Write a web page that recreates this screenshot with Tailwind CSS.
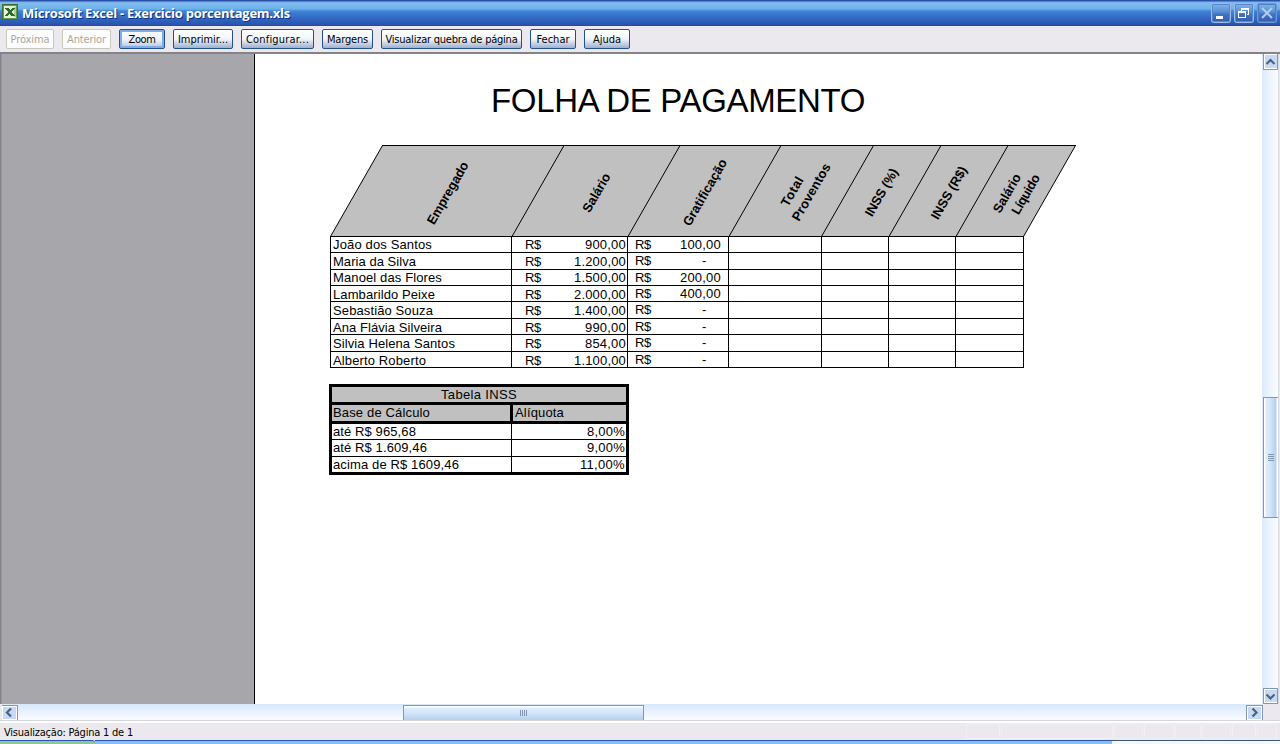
<!DOCTYPE html>
<html lang="pt-BR">
<head>
<meta charset="utf-8">
<title>Microsoft Excel - Exercicio porcentagem.xls</title>
<script src="https://cdn.jsdelivr.net/npm/@tailwindcss/browser@4"></script>
</head>
<body class="flex h-[744px] w-[1280px] flex-col overflow-hidden bg-[#ebe9ed] font-['DejaVu_Sans_Condensed','DejaVu_Sans',sans-serif] text-[11px] text-black">

<!-- Title bar -->
<header class="flex h-[26px] shrink-0 items-center bg-[linear-gradient(to_bottom,#2b50a8_0px,#2b50a8_1px,#7db4ec_2px,#7fbcf0_4px,#6db0ea_9px,#3f86d8_11px,#3a78cc_14px,#2f62bd_20px,#2a52ad_25px,#24429c_26px)] pl-[2px] pr-[3px]">
  <svg class="-mt-[2px] size-4 shrink-0" viewBox="0 0 16 16" shape-rendering="crispEdges">
    <rect width="16" height="16" fill="#3c6e2c"/><rect x="1" y="1" width="14" height="14" fill="#5f9a45"/><rect x="2" y="2" width="12" height="12" fill="#e4f0dc"/>
    <rect x="12" y="3" width="2" height="10" fill="#a9cf92"/>
    <path d="M3 4h4l1.500 2.500L10 4h3l-3 4 3 4H9L7.500 9.500 6 12H3l3-4z" fill="#2f6b2c"/>
  </svg>
  <h1 class="ml-1 whitespace-nowrap font-['Open_Sans',sans-serif] text-[13px] font-bold leading-[18px] text-white [text-shadow:1px_1px_0_#12307c]"><span data-w="268">Microsoft Excel - Exercicio porcentagem.xls</span></h1>
  <div class="ml-auto flex gap-[3px]">
    <svg class="size-5" viewBox="0 0 20 20"><rect x=".5" y=".5" width="19" height="19" rx="2" fill="#5685cb" stroke="#9dbbe6"/><rect x="2" y="2" width="16" height="16" fill="url(#btn)"/><rect x="5" y="13" width="7" height="3" fill="#fff"/><defs><linearGradient id="btn" x2="0" y2="1"><stop stop-color="#7db0e6"/><stop offset=".4" stop-color="#5a92d6"/><stop offset=".6" stop-color="#3f72c2"/><stop offset="1" stop-color="#3560b2"/></linearGradient></defs></svg>
    <svg class="size-5" viewBox="0 0 20 20"><rect x=".5" y=".5" width="19" height="19" rx="2" fill="#5685cb" stroke="#9dbbe6"/><rect x="2" y="2" width="16" height="16" fill="url(#btn)"/><path d="M7 5h8v2H7zM14 7h1v5h-2v-1h1zM7 7h1v1H7zM4 8h8v7H4zM5 10v4h6v-4z" fill="#fff" fill-rule="evenodd"/></svg>
    <svg class="size-5" viewBox="0 0 20 20"><rect x=".5" y=".5" width="19" height="19" rx="2" fill="#4d7bc6" stroke="#6f97d6"/><rect x="2" y="2" width="16" height="16" fill="url(#btn)"/><path d="M5 5l10 10M15 5L5 15" stroke="#b4cbec" stroke-width="2"/></svg>
  </div>
</header>

<!-- Print preview toolbar -->
<nav class="flex h-[26px] shrink-0 items-start gap-2 whitespace-nowrap pl-[6px] pt-[3px] leading-[18px] [&_span]:block [&_span]:w-fit [&_span]:mx-auto [&_span]:pt-px">
  <button class="h-5 w-12 rounded-[2px] border border-[#c9c7ba] bg-[#fdfdfd] text-[#aca899]"><span data-w="39">Próxima</span></button>
  <button class="h-5 w-[49px] rounded-[2px] border border-[#c9c7ba] bg-[#fdfdfd] text-[#aca899]"><span data-w="39">Anterior</span></button>
  <button class="h-5 w-[46px] rounded-[2px] border border-[#23508e] bg-[linear-gradient(#fff,#edf2f8_55%,#b4c1d8)] shadow-[inset_0_0_0_2px_#82ace8]"><span data-w="27">Zoom</span></button>
  <button class="h-5 w-[60px] rounded-[2px] border border-[#23508e] bg-[linear-gradient(#fff,#f2f5fa_50%,#9fb0cd)]"><span data-w="50">Imprimir...</span></button>
  <button class="h-5 w-[73px] rounded-[2px] border border-[#23508e] bg-[linear-gradient(#fff,#f2f5fa_50%,#9fb0cd)]"><span data-w="63">Configurar...</span></button>
  <button class="h-5 w-[51px] rounded-[2px] border border-[#23508e] bg-[linear-gradient(#fff,#f2f5fa_50%,#9fb0cd)]"><span data-w="41">Margens</span></button>
  <button class="h-5 w-[141px] rounded-[2px] border border-[#23508e] bg-[linear-gradient(#fff,#f2f5fa_50%,#9fb0cd)]"><span data-w="132">Visualizar quebra de página</span></button>
  <button class="h-5 w-[46px] rounded-[2px] border border-[#23508e] bg-[linear-gradient(#fff,#f2f5fa_50%,#9fb0cd)]"><span data-w="33">Fechar</span></button>
  <button class="h-5 w-[46px] rounded-[2px] border border-[#23508e] bg-[linear-gradient(#fff,#f2f5fa_50%,#9fb0cd)]"><span data-w="28">Ajuda</span></button>
</nav>

<!-- Preview area -->
<div class="flex h-[652px] shrink-0 border-l border-t-2 border-l-[#85838a] border-t-[#85838a]">
  <div class="w-[254px] border-l border-r border-l-[#98969c] border-r-black bg-[#a7a6aa]"></div>
  <main class="w-[1007px] bg-white pl-[74px] font-['Liberation_Sans',Arial,sans-serif] text-[13px]">
    <h2 class="ml-[162px] whitespace-nowrap pt-[28px] text-[33px] leading-[38px]"><span data-w="374">FOLHA DE PAGAMENTO</span></h2>

    <svg class="mt-[25px] block h-[92px] w-[748px]" viewBox="329 145 748 92" font-weight="bold" font-size="13">
      <path d="M382.500 145.500H1075.500L1023.500 236.500H330.500z" fill="#c0c0c0"/>
      <path d="M382 145.500H1076M330 236.500H1024" stroke="#000" shape-rendering="crispEdges"/>
      <path d="M382.500 145.500l-52 91M564 145.500l-52 91M680 145.500l-52 91M781 145.500l-52 91M873.500 145.500l-52 91M941 145.500l-52 91M1008 145.500l-52 91M1075.500 145.500l-52 91" stroke="#000" fill="none"/>
      <g>
        <text transform="translate(434 225.500) rotate(-60)" textLength="70">Empregado</text>
        <text transform="translate(589.500 213.500) rotate(-60)" textLength="43">Salário</text>
        <text transform="translate(690 227) rotate(-60)" textLength="75">Gratificação</text>
        <text transform="translate(788 207.500) rotate(-60)" textLength="32">Total</text>
        <text transform="translate(799 222) rotate(-60)" textLength="64">Proventos</text>
        <text transform="translate(872 217.500) rotate(-60)" textLength="53">INSS (%)</text>
        <text transform="translate(938 220.500) rotate(-60)" textLength="59">INSS (R$)</text>
        <text transform="translate(1000 214) rotate(-60)" textLength="43">Salário</text>
        <text transform="translate(1018.500 215.500) rotate(-60)" textLength="44">Líquido</text>
      </g>
    </svg>

    <div id="payroll" class="ml-px grid w-[694px] grid-cols-[181px_116px_101px_93px_67px_67px_68px] grid-rows-[16px_17px_16px_16px_17px_16px_17px_16px] whitespace-nowrap border-l border-black leading-[16px]"></div>

    <!-- INSS bracket table -->
    <section class="mt-4 w-[300px] whitespace-nowrap border-[3px] border-black leading-[16px]">
      <div class="h-[18px] border-b-[3px] border-black bg-[#c0c0c0] text-center"><span data-w="76">Tabela INSS</span></div>
      <div class="flex h-[19px] border-b-[3px] border-black bg-[#c0c0c0]">
        <div class="w-[181px] border-r-[3px] border-black pl-px"><span data-w="97">Base de Cálculo</span></div>
        <div class="pl-[2px]"><span data-w="49">Alíquota</span></div>
      </div>
      <div class="flex h-4 border-b border-black"><div class="w-[180px] border-r border-black pl-px"><span data-w="83">até R$ 965,68</span></div><div class="grow pr-px text-right"><span data-w="38">8,00%</span></div></div>
      <div class="flex h-[17px] border-b border-black"><div class="w-[180px] border-r border-black pl-px"><span data-w="94">até R$ 1.609,46</span></div><div class="grow pr-px text-right"><span data-w="38">9,00%</span></div></div>
      <div class="flex h-[15px]"><div class="w-[180px] border-r border-black pl-px"><span data-w="126">acima de R$ 1609,46</span></div><div class="grow pr-px text-right"><span data-w="45">11,00%</span></div></div>
    </section>
  </main>

  <!-- Vertical scrollbar -->
  <aside class="flex w-[17px] flex-col border-r border-[#d5dae3] bg-[linear-gradient(to_right,#dcebfd,#fbfcff)]">
    <svg class="h-4 w-4" viewBox="0 0 16 16"><rect x="1.500" y="-1" width="14" height="16.500" fill="#fff" stroke="#7f98ba"/><rect x="3" y="1" width="12" height="13" fill="#c6dbf3"/><path d="M4.500 10L8.500 6l4 4" fill="none" stroke="#4d6185" stroke-width="2.200"/></svg>
    <div class="mt-[327px] flex h-[121px] w-[15px] ml-px flex-col items-center justify-center gap-px border border-r-0 border-[#7f98ba] bg-[linear-gradient(to_right,#fff_0px,#fff_1px,#dfedfd_2px,#d3e6fb_6px,#b7cfea_12px,#fff_13px)]">
      <i class="h-px w-[6px] bg-[#8094b4]"></i><i class="h-px w-[6px] bg-[#8094b4]"></i><i class="h-px w-[6px] bg-[#8094b4]"></i><i class="h-px w-[6px] bg-[#8094b4]"></i>
    </div>
    <svg class="mt-auto h-4 w-4" viewBox="0 0 16 16"><rect x="1.500" y=".5" width="14" height="15" fill="#fff" stroke="#7f98ba"/><rect x="3" y="2" width="12" height="12" fill="#c6dbf3"/><path d="M4.500 6.500l4 4 4-4" fill="none" stroke="#4d6185" stroke-width="2.200"/></svg>
  </aside>
</div>

<!-- Horizontal scrollbar -->
<div class="flex h-[17px] shrink-0 border-b border-[#d3d6df] pl-[2px]">
  <div class="flex w-[1261px] bg-[linear-gradient(#d7e8fc,#fbfcff)]">
    <svg class="h-4 w-4" viewBox="0 0 16 16"><rect x="-.5" y="1.500" width="16" height="16" fill="#fff" stroke="#7f98ba"/><rect x="1" y="3" width="13" height="12" fill="#c6dbf3"/><path d="M9 4.500L5 8.500l4 4" fill="none" stroke="#4d6185" stroke-width="2.200"/></svg>
    <div class="ml-[385px] mt-px flex h-[15px] w-[241px] items-center justify-center gap-px border border-b-0 border-[#7f98ba] bg-[linear-gradient(#fff_0px,#fff_1px,#dfedfd_2px,#d3e6fb_7px,#b7cfea_14px)]">
      <i class="h-[6px] w-px bg-[#8094b4]"></i><i class="h-[6px] w-px bg-[#8094b4]"></i><i class="h-[6px] w-px bg-[#8094b4]"></i><i class="h-[6px] w-px bg-[#8094b4]"></i>
    </div>
    <svg class="ml-auto h-4 w-[17px]" viewBox="0 0 17 16"><rect x=".5" y="1.500" width="16" height="16" fill="#fff" stroke="#7f98ba"/><rect x="2" y="3" width="13" height="12" fill="#c6dbf3"/><path d="M6.500 4.500l4 4-4 4" fill="none" stroke="#4d6185" stroke-width="2.200"/></svg>
  </div>
</div>

<!-- Status bar -->
<footer class="flex h-[19px] shrink-0 items-center whitespace-nowrap border-t-2 border-white pl-1 pr-[3px]">
  <span class="pt-[3px]" data-w="129">Visualização: Página 1 de 1</span>
  <div class="ml-auto flex h-[15px] gap-px">
    <i class="w-[34px] border border-[#f1eff3]"></i><i class="w-[112px] border border-[#f1eff3]"></i><i class="w-[29px] border border-[#f1eff3]"></i><i class="w-[30px] border border-[#f1eff3]"></i><i class="w-[26px] border border-[#f1eff3]"></i><i class="w-[29px] border border-[#f1eff3]"></i><i class="w-[24px] border border-[#f1eff3]"></i><i class="w-[20px] border border-[#f1eff3]"></i>
  </div>
</footer>

<!-- Top edge of the taskbar -->
<div class="flex h-1 shrink-0">
  <div class="w-[95px] rounded-tr-[3px] border-t border-[#2b52b5] bg-[#8cc896]"></div>
  <div class="w-[1017px] border-t border-[#2b52b5] bg-[#84c1f0]"></div>
  <div class="grow border-t border-[#3c5a78] bg-[#f4f7fd]"></div>
</div>

<script>
const rows = [
  ["João dos Santos", 99, "900,00", 41, "100,00", "leading-[16px]"],
  ["Maria da Silva", 83, "1.200,00", 52, "-", "leading-[18px]"],
  ["Manoel das Flores", 109, "1.500,00", 52, "200,00", "leading-[16px]"],
  ["Lambarildo Peixe", 102, "2.000,00", 52, "400,00", "leading-[18px]"],
  ["Sebastião Souza", 100, "1.400,00", 52, "-", "leading-[18px]"],
  ["Ana Flávia Silveira", 109, "990,00", 41, "-", "leading-[18px]"],
  ["Silvia Helena Santos", 122, "854,00", 41, "-", "leading-[18px]"],
  ["Alberto Roberto", 93, "1.100,00", 52, "-", "leading-[18px]"],
];
const cell = "border-r border-b border-black";
document.getElementById("payroll").innerHTML = rows.map(([name, nw, pay, pw, bonus, lead]) => `
  <div class="${cell} ${lead} flex min-h-0 pl-[2px]"><span data-w="${nw}">${name}</span></div>
  <div class="${cell} ${lead} flex min-h-0 justify-between pl-[13px] pr-px"><span data-w="16">R$</span><span data-w="${pw}">${pay}</span></div>
  <div class="${cell} flex min-h-0 justify-between pl-[7px] ${bonus === "-" ? "pr-[21px]" : "pr-[7px]"}"><span data-w="16">R$</span><span data-w="${bonus === "-" ? 5 : 41}">${bonus}</span></div>
  <div class="${cell}"></div><div class="${cell}"></div><div class="${cell}"></div><div class="${cell}"></div>`).join("");

function fit() {
  document.querySelectorAll("[data-w]").forEach(el => {
    el.style.letterSpacing = "0px";
    const natural = el.getBoundingClientRect().width;
    el.style.letterSpacing = (el.dataset.w - natural) / el.textContent.length + "px";
  });
}
fit();
addEventListener("load", () => { fit(); document.fonts.ready.then(fit); requestAnimationFrame(fit); });
new ResizeObserver(fit).observe(document.body);
</script>
</body>
</html>
